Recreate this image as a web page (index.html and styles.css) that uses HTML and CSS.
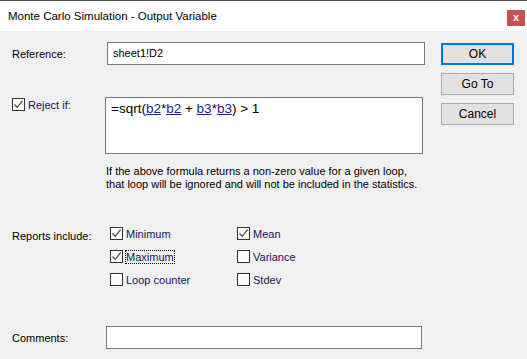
FILE: index.html
```html
<!DOCTYPE html>
<html lang="en">
<head>
    <meta charset="UTF-8">
    <title>Monte Carlo Simulation - Output Variable</title>
    <link rel="stylesheet" href="styles.css">
</head>
<body>
    <div class="window">
        <div class="titlebar">
            <span class="title">Monte Carlo Simulation - Output Variable</span>
            <span class="close">x</span>
        </div>

        <div class="content">
            <div class="top">
                <div class="form">
                    <div class="row ref-row">
                        <label class="label">Reference:</label>
                        <div class="textbox ref-box">sheet1!D2</div>
                    </div>

                    <div class="row reject-row">
                        <div class="label check-label">
                            <span class="check checked"><svg width="11" height="11" viewBox="0 0 11 11"><path d="M1.5 5.5 L4.2 8.3 L9.6 1.6" fill="none" stroke="#4d4d4d" stroke-width="1.3"/></svg></span>
                            <span class="check-text">Reject if:</span>
                        </div>
                        <div class="textbox formula">=sqrt(<u>b2</u>*<u>b2</u> + <u>b3</u>*<u>b3</u>) &gt; 1</div>
                    </div>

                    <p class="note">If the above formula returns a non-zero value for a given loop,<br>that loop will be ignored and will not be included in the statistics.</p>
                </div>

                <div class="buttons">
                    <div class="btn default">OK</div>
                    <div class="btn">Go To</div>
                    <div class="btn">Cancel</div>
                </div>
            </div>

            <div class="row reports">
                <div class="label">Reports include:</div>
                <div class="options">
                    <div class="option">
                        <span class="check checked"><svg width="11" height="11" viewBox="0 0 11 11"><path d="M1.5 5.5 L4.2 8.3 L9.6 1.6" fill="none" stroke="#4d4d4d" stroke-width="1.3"/></svg></span>
                        <span class="check-text">Minimum</span>
                    </div>
                    <div class="option">
                        <span class="check checked"><svg width="11" height="11" viewBox="0 0 11 11"><path d="M1.5 5.5 L4.2 8.3 L9.6 1.6" fill="none" stroke="#4d4d4d" stroke-width="1.3"/></svg></span>
                        <span class="check-text">Mean</span>
                    </div>
                    <div class="option">
                        <span class="check checked"><svg width="11" height="11" viewBox="0 0 11 11"><path d="M1.5 5.5 L4.2 8.3 L9.6 1.6" fill="none" stroke="#4d4d4d" stroke-width="1.3"/></svg></span>
                        <span class="check-text focus">Maximum</span>
                    </div>
                    <div class="option">
                        <span class="check"></span>
                        <span class="check-text">Variance</span>
                    </div>
                    <div class="option">
                        <span class="check"></span>
                        <span class="check-text">Loop counter</span>
                    </div>
                    <div class="option">
                        <span class="check"></span>
                        <span class="check-text">Stdev</span>
                    </div>
                </div>
            </div>

            <div class="row comments-row">
                <label class="label">Comments:</label>
                <div class="textbox comments-box"></div>
            </div>
        </div>
    </div>
</body>
</html>
```

FILE: styles.css
```css
html, body {
    margin: 0;
    padding: 0;
}
body {
    font-family: "Liberation Sans", Arial, sans-serif;
    font-size: 11px;
    color: #000;
    background-color: #f0f0f0;
}
.window {
    width: 527px;
    height: 359px;
    border-top: 1px solid #5a5a5a;
    box-sizing: border-box;
    background-color: #f0f0f0;
}
.titlebar {
    height: 30px;
    background-color: #fff;
    display: flex;
    align-items: center;
    justify-content: space-between;
    padding-left: 8px;
}
.title {
    font-family: "Liberation Sans", Arial, sans-serif;
    font-size: 11.5px;
    color: #000;
}
.close {
    width: 18px;
    height: 16px;
    background-color: #c75050;
    color: #fff;
    font-weight: bold;
    font-size: 11px;
    text-align: center;
    line-height: 15px;
    margin-right: 2px;
    margin-top: 3px;
}
.content {
    padding: 11px 0 0 12px;
}
.top {
    display: flex;
}
.form {
    width: 413px;
}
.row {
    display: flex;
}
.label {
    width: 95px;
    flex-shrink: 0;
}
.textbox {
    background-color: #fff;
    border: 1px solid #7a7a7a;
    box-sizing: border-box;
}
.ref-row {
    height: 23px;
    align-items: center;
}
.ref-box {
    width: 318px;
    height: 23px;
    padding: 4px 0 0 5px;
}
.reject-row {
    margin-top: 32px;
}
.check-label {
    display: flex;
    align-items: center;
    height: 13px;
    margin-top: 1px;
    width: 93px;
}
.check {
    width: 13px;
    height: 13px;
    border: 1px solid #333;
    background-color: #fff;
    box-sizing: border-box;
    display: inline-flex;
    align-items: center;
    justify-content: center;
    flex-shrink: 0;
}
.check-text {
    margin-left: 3px;
    color: #14145a;
}
.formula {
    width: 318px;
    height: 57px;
    font-size: 13.5px;
    padding: 3px 0 0 5px;
}
.formula u {
    color: #1c1c8c;
}
.note {
    margin: 11px 0 0 94px;
    line-height: 13px;
}
.buttons {
    margin-left: 16px;
    display: flex;
    flex-direction: column;
    gap: 8px;
    padding-top: 1px;
}
.btn {
    width: 73px;
    height: 22px;
    box-sizing: border-box;
    background-color: #e1e1e1;
    border: 1px solid #adadad;
    text-align: center;
    line-height: 20px;
    font-size: 12px;
}
.btn.default {
    border: 2px solid #0078d7;
    line-height: 18px;
}
.reports {
    margin-top: 36px;
}
.reports .label {
    padding-top: 3px;
    width: 98px;
}
.options {
    display: grid;
    grid-template-columns: 127px 100px;
    row-gap: 10px;
}
.option {
    display: flex;
    align-items: center;
    height: 13px;
}
.focus {
    outline: 1px dotted #000;
    outline-offset: 0;
}
.comments-row {
    margin-top: 40px;
    align-items: center;
}
.comments-box {
    margin-left: -1px;
    width: 316px;
    height: 23px;
}
```
